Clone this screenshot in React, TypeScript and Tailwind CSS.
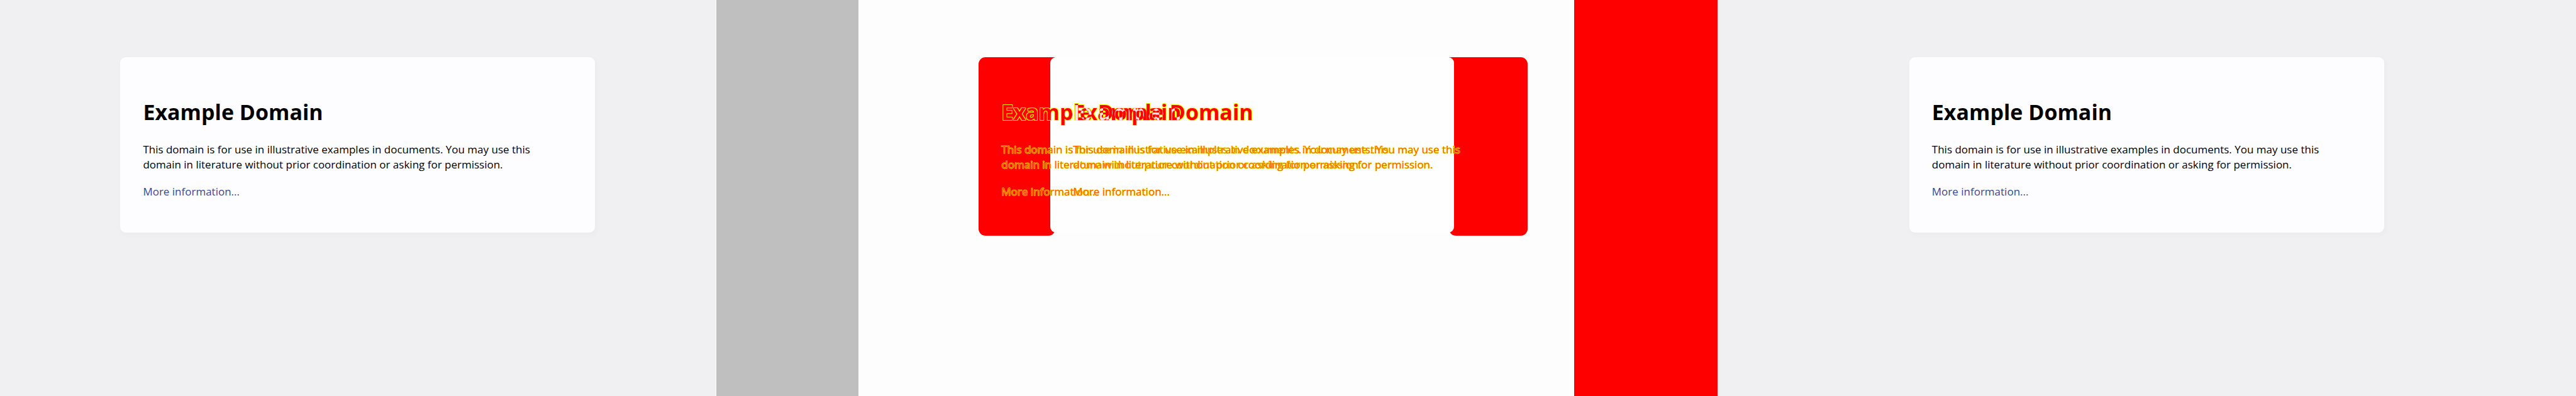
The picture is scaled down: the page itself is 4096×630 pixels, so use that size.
import React from "react";

const SENTENCE =
  "This domain is for use in illustrative examples in documents. You may use this domain in literature without prior coordination or asking for permission.";

function DomainCard() {
  return (
    <article className="mx-auto mt-[91px] h-fit w-[755px] max-w-full rounded-[9px] bg-[#fdfdff] px-9 pt-[63px] pb-[53px] shadow-[2px_3px_8px_2px_rgba(0,0,0,0.02)]">
      <h1 className="text-[34px] leading-[48px] font-bold text-black">Example Domain</h1>
      <p className="mt-6 max-w-[660px] text-[17px] leading-[24px] text-black">{SENTENCE}</p>
      <a href="#more" className="mt-[19px] block w-fit text-[17px] leading-[24px] text-[#38488f]">
        More information...
      </a>
    </article>
  );
}

function DiffCopy({ shifted = false }: { shifted?: boolean }) {
  return (
    <div
      className={
        (shifted ? "pl-[150px]" : "pl-9") +
        " col-start-1 row-start-1 pt-[135px] text-[17px] leading-[24px] text-[#ff5a00] [paint-order:stroke_fill] [-webkit-text-stroke:1px_#ffee00]"
      }
    >
      <p className="w-[660px]">{SENTENCE}</p>
      <a href="#more" className="mt-[19px] block w-fit">
        More information...
      </a>
    </div>
  );
}

function DiffPane() {
  return (
    <section className="bg-[#fdfdfd]">
      <svg width="0" height="0" className="absolute" aria-hidden="true">
        <filter id="overlap" colorInterpolationFilters="sRGB">
          <feColorMatrix
            in="SourceGraphic"
            values="0 0 0 0 1  0.9 0.9 0 0 -0.9  0.9 0.9 0 0 -0.9  0 0 0 1 0"
            result="ink"
          />
          <feMorphology in="SourceAlpha" operator="dilate" radius="1" result="fat" />
          <feFlood floodColor="#ffff00" floodOpacity="0.9" />
          <feComposite in2="fat" operator="in" result="edge" />
          <feMerge>
            <feMergeNode in="edge" />
            <feMergeNode in="ink" />
          </feMerge>
        </filter>
      </svg>
      <div className="mt-[91px] ml-[191px] grid w-[873px]">
        <div className="col-start-1 row-start-1 flex h-[284px] justify-between">
          <div className="w-[122px] rounded-l-[11px] rounded-br-[11px] bg-[#ff0000]" />
          <div className="w-[125px] rounded-r-[11px] rounded-bl-[11px] bg-[#ff0000]" />
        </div>
        <div className="col-start-1 row-start-1 mr-[117px] ml-[114px] h-[279px] rounded-[9px] bg-[#fefefe]" />
        <div className="col-start-1 row-start-1 grid h-fit pt-[63px] text-[34px] leading-[48px] font-bold [filter:url(#overlap)]">
          <h2 className="col-start-1 row-start-1 pl-9 text-[#ff0000]">Example Domain</h2>
          <h2 className="col-start-1 row-start-1 pl-[150px] text-[#00ff00] mix-blend-screen">Example Domain</h2>
        </div>
        <DiffCopy />
        <DiffCopy shifted />
      </div>
    </section>
  );
}

export default function App() {
  return (
    <main className="grid min-h-screen grid-cols-[5fr_1fr_5fr_1fr_6fr] bg-[#f0f0f2] font-['Open_Sans','Noto_Sans',sans-serif]">
      <section className="flex items-start">
        <DomainCard />
      </section>
      <div className="border-l border-white bg-[#bfbfbf]" />
      <DiffPane />
      <div className="bg-[#ff0000]" />
      <section className="flex items-start">
        <DomainCard />
      </section>
    </main>
  );
}
